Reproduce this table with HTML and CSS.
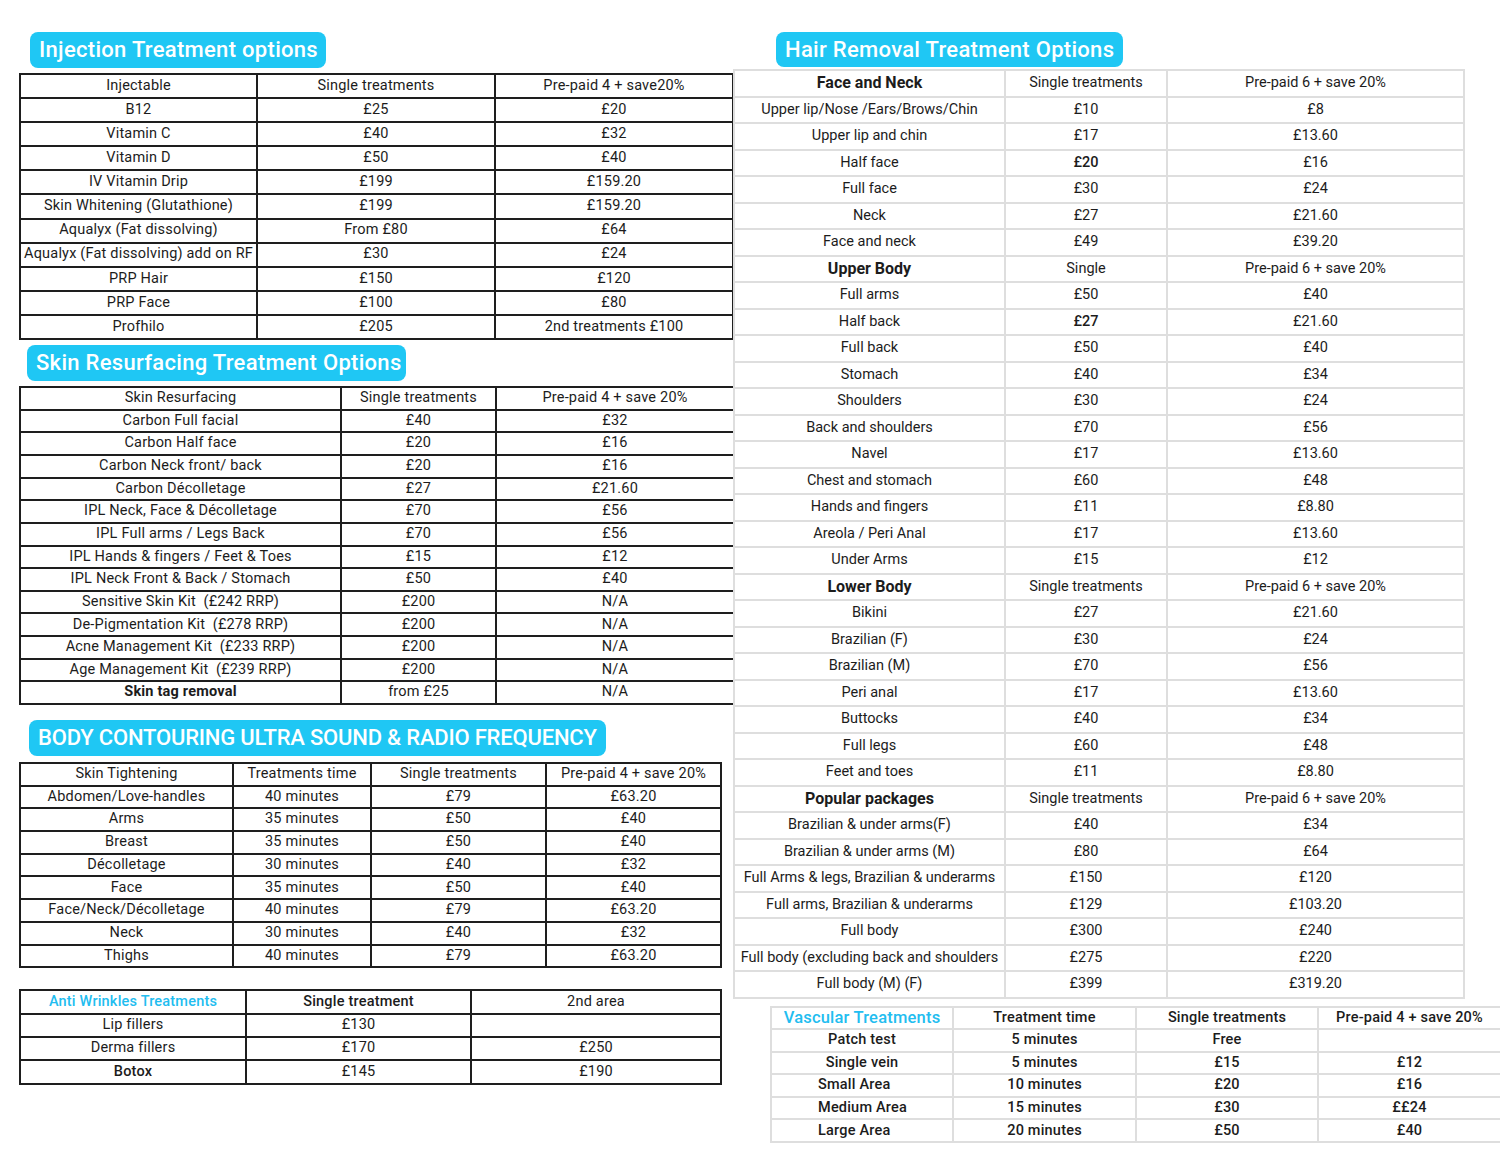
FILE: index.html
```html
<!DOCTYPE html>
<html>
<head>
<meta charset="utf-8">
<link rel="stylesheet" href="styles.css">
</head>
<body>
<div class="page">
  <div class="col-left">
    <div class="pill pill-inj">Injection Treatment options</div>
    <table class="dark t-inj">
      <colgroup><col style="width:237px"><col style="width:238px"><col style="width:238px"></colgroup>
      <tr><td>Injectable</td><td>Single treatments</td><td>Pre-paid 4 + save20%</td></tr>
      <tr><td>B12</td><td>£25</td><td>£20</td></tr>
      <tr><td>Vitamin C</td><td>£40</td><td>£32</td></tr>
      <tr><td>Vitamin D</td><td>£50</td><td>£40</td></tr>
      <tr><td>IV Vitamin Drip</td><td>£199</td><td>£159.20</td></tr>
      <tr><td>Skin Whitening (Glutathione)</td><td>£199</td><td>£159.20</td></tr>
      <tr><td>Aqualyx (Fat dissolving)</td><td>From £80</td><td>£64</td></tr>
      <tr><td>Aqualyx (Fat dissolving) add on RF</td><td>£30</td><td>£24</td></tr>
      <tr><td>PRP Hair</td><td>£150</td><td>£120</td></tr>
      <tr><td>PRP Face</td><td>£100</td><td>£80</td></tr>
      <tr><td>Profhilo</td><td>£205</td><td>2nd treatments £100</td></tr>
    </table>

    <div class="pill pill-skin">Skin Resurfacing Treatment Options</div>
    <table class="dark t-skin">
      <colgroup><col style="width:321px"><col style="width:155px"><col style="width:238px"></colgroup>
      <tr><td>Skin Resurfacing</td><td>Single treatments</td><td>Pre-paid 4 + save 20%</td></tr>
      <tr><td>Carbon Full facial</td><td>£40</td><td>£32</td></tr>
      <tr><td>Carbon Half face</td><td>£20</td><td>£16</td></tr>
      <tr><td>Carbon Neck front/ back</td><td>£20</td><td>£16</td></tr>
      <tr><td>Carbon Décolletage</td><td>£27</td><td>£21.60</td></tr>
      <tr><td>IPL Neck, Face &amp; Décolletage</td><td>£70</td><td>£56</td></tr>
      <tr><td>IPL Full arms / Legs Back</td><td>£70</td><td>£56</td></tr>
      <tr><td>IPL Hands &amp; fingers / Feet &amp; Toes</td><td>£15</td><td>£12</td></tr>
      <tr><td>IPL Neck Front &amp; Back / Stomach</td><td>£50</td><td>£40</td></tr>
      <tr><td>Sensitive Skin Kit&nbsp;&nbsp;(£242 RRP)</td><td>£200</td><td>N/A</td></tr>
      <tr><td>De-Pigmentation Kit&nbsp;&nbsp;(£278 RRP)</td><td>£200</td><td>N/A</td></tr>
      <tr><td>Acne Management Kit&nbsp;&nbsp;(£233 RRP)</td><td>£200</td><td>N/A</td></tr>
      <tr><td>Age Management Kit&nbsp;&nbsp;(£239 RRP)</td><td>£200</td><td>N/A</td></tr>
      <tr><td class="b">Skin tag removal</td><td>from £25</td><td>N/A</td></tr>
    </table>

    <div class="pill pill-body">BODY CONTOURING ULTRA SOUND &amp; RADIO FREQUENCY</div>
    <table class="dark t-body">
      <colgroup><col style="width:213px"><col style="width:138px"><col style="width:175px"><col style="width:175px"></colgroup>
      <tr><td>Skin Tightening</td><td>Treatments time</td><td>Single treatments</td><td>Pre-paid 4 + save 20%</td></tr>
      <tr><td>Abdomen/Love-handles</td><td>40 minutes</td><td>£79</td><td>£63.20</td></tr>
      <tr><td>Arms</td><td>35 minutes</td><td>£50</td><td>£40</td></tr>
      <tr><td>Breast</td><td>35 minutes</td><td>£50</td><td>£40</td></tr>
      <tr><td>Décolletage</td><td>30 minutes</td><td>£40</td><td>£32</td></tr>
      <tr><td>Face</td><td>35 minutes</td><td>£50</td><td>£40</td></tr>
      <tr><td>Face/Neck/Décolletage</td><td>40 minutes</td><td>£79</td><td>£63.20</td></tr>
      <tr><td>Neck</td><td>30 minutes</td><td>£40</td><td>£32</td></tr>
      <tr><td>Thighs</td><td>40 minutes</td><td>£79</td><td>£63.20</td></tr>
    </table>

    <table class="dark t-anti">
      <colgroup><col style="width:226px"><col style="width:225px"><col style="width:250px"></colgroup>
      <tr><td class="cyan">Anti Wrinkles Treatments</td><td class="m">Single treatment</td><td>2nd area</td></tr>
      <tr><td>Lip fillers</td><td>£130</td><td></td></tr>
      <tr><td>Derma fillers</td><td>£170</td><td>£250</td></tr>
      <tr><td class="m">Botox</td><td>£145</td><td>£190</td></tr>
    </table>
  </div>

  <div class="col-right">
    <div class="pill pill-hair">Hair Removal Treatment Options</div>
    <table class="light t-hair">
      <colgroup><col style="width:271px"><col style="width:162px"><col style="width:297px"></colgroup>
      <tr><td class="sec">Face and Neck</td><td>Single treatments</td><td>Pre-paid 6 + save 20%</td></tr>
      <tr><td>Upper lip/Nose /Ears/Brows/Chin</td><td>£10</td><td>£8</td></tr>
      <tr><td>Upper lip and chin</td><td>£17</td><td>£13.60</td></tr>
      <tr><td>Half face</td><td class="m">£20</td><td>£16</td></tr>
      <tr><td>Full face</td><td>£30</td><td>£24</td></tr>
      <tr><td>Neck</td><td>£27</td><td>£21.60</td></tr>
      <tr><td>Face and neck</td><td>£49</td><td>£39.20</td></tr>
      <tr><td class="sec">Upper Body</td><td>Single</td><td>Pre-paid 6 + save 20%</td></tr>
      <tr><td>Full arms</td><td>£50</td><td>£40</td></tr>
      <tr><td>Half back</td><td class="m">£27</td><td>£21.60</td></tr>
      <tr><td>Full back</td><td>£50</td><td>£40</td></tr>
      <tr><td>Stomach</td><td>£40</td><td>£34</td></tr>
      <tr><td>Shoulders</td><td>£30</td><td>£24</td></tr>
      <tr><td>Back and shoulders</td><td>£70</td><td>£56</td></tr>
      <tr><td>Navel</td><td>£17</td><td>£13.60</td></tr>
      <tr><td>Chest and stomach</td><td>£60</td><td>£48</td></tr>
      <tr><td>Hands and fingers</td><td>£11</td><td>£8.80</td></tr>
      <tr><td>Areola / Peri Anal</td><td>£17</td><td>£13.60</td></tr>
      <tr><td>Under Arms</td><td>£15</td><td>£12</td></tr>
      <tr><td class="sec">Lower Body</td><td>Single treatments</td><td>Pre-paid 6 + save 20%</td></tr>
      <tr><td>Bikini</td><td>£27</td><td>£21.60</td></tr>
      <tr><td>Brazilian (F)</td><td>£30</td><td>£24</td></tr>
      <tr><td>Brazilian (M)</td><td>£70</td><td>£56</td></tr>
      <tr><td>Peri anal</td><td>£17</td><td>£13.60</td></tr>
      <tr><td>Buttocks</td><td>£40</td><td>£34</td></tr>
      <tr><td>Full legs</td><td>£60</td><td>£48</td></tr>
      <tr><td>Feet and toes</td><td>£11</td><td>£8.80</td></tr>
      <tr><td class="sec">Popular packages</td><td>Single treatments</td><td>Pre-paid 6 + save 20%</td></tr>
      <tr><td>Brazilian &amp; under arms(F)</td><td>£40</td><td>£34</td></tr>
      <tr><td>Brazilian &amp; under arms (M)</td><td>£80</td><td>£64</td></tr>
      <tr><td>Full Arms &amp; legs, Brazilian &amp; underarms</td><td>£150</td><td>£120</td></tr>
      <tr><td>Full arms, Brazilian &amp; underarms</td><td>£129</td><td>£103.20</td></tr>
      <tr><td>Full body</td><td>£300</td><td>£240</td></tr>
      <tr><td>Full body (excluding back and shoulders</td><td>£275</td><td>£220</td></tr>
      <tr><td>Full body (M) (F)</td><td>£399</td><td>£319.20</td></tr>
    </table>

    <table class="light t-vasc">
      <colgroup><col style="width:182px"><col style="width:183px"><col style="width:182px"><col style="width:183px"></colgroup>
      <tr><td class="cyan vh">Vascular Treatments</td><td>Treatment time</td><td>Single treatments</td><td>Pre-paid 4 + save 20%</td></tr>
      <tr><td>Patch test</td><td>5 minutes</td><td>Free</td><td></td></tr>
      <tr><td>Single vein</td><td>5 minutes</td><td>£15</td><td>£12</td></tr>
      <tr><td class="sh">Small Area</td><td>10 minutes</td><td>£20</td><td>£16</td></tr>
      <tr><td class="sh">Medium Area</td><td>15 minutes</td><td>£30</td><td>££24</td></tr>
      <tr><td class="sh">Large Area</td><td>20 minutes</td><td>£50</td><td>£40</td></tr>
    </table>
  </div>
</div>
</body>
</html>
```

FILE: styles.css
```css
* { box-sizing: border-box; }
html, body { margin: 0; padding: 0; background: #fff; }
body {
  font-family: Roboto, "Liberation Sans", sans-serif;
  color: #1c1c1c;
  width: 1500px;
  height: 1159px;
  overflow: hidden;
}
.page {
  display: flex;
  align-items: flex-start;
}
.col-left {
  width: 733px;
  padding-left: 19px;
  padding-top: 32px;
  flex: none;
}
.col-right {
  width: 767px;
  padding-top: 32px;
  flex: none;
}
.pill {
  display: inline-block;
  background: #1fc7f4;
  color: #fff;
  font-weight: 500;
  font-size: 22px;
  letter-spacing: 0.3px;
  line-height: 36px;
  height: 36px;
  padding: 0 9px;
  border-radius: 8px;
  white-space: nowrap;
}
.pill-inj { margin-left: 11px; width: 296px; }
.pill-skin { margin-left: 8px; margin-top: 5px; width: 379px; }
.pill-body { margin-left: 10px; margin-top: 15px; width: 577px; letter-spacing: -0.2px; }
.pill-hair { margin-left: 43px; width: 347px; height: 35px; line-height: 35px; }

table {
  border-collapse: collapse;
  table-layout: fixed;
}
td {
  text-align: center;
  padding: 0;
  white-space: nowrap;
  overflow: hidden;
  font-size: 14.5px;
  letter-spacing: 0.2px;
  line-height: 1;
}
.dark td { border: 2px solid #1e1e1e; }
.light td { border: 2px solid #dedede; }

.t-inj { width: 714px; margin-top: 5px; }
.t-inj tr { height: 24.1px; }

.t-skin { width: 714px; margin-top: 5px; }
.t-skin tr { height: 22.65px; }

.t-body { width: 701px; margin-top: 6px; }
.t-body tr { height: 22.7px; }

.t-anti { width: 701px; margin-top: 21px; }
.t-anti tr { height: 23.4px; }

.t-hair { width: 730px; margin-top: 2px; }
.t-hair tr { height: 26.5px; }
.t-hair td { letter-spacing: 0; }

.t-vasc { width: 730px; margin-top: 7px; margin-left: 37px; }
.t-vasc tr { height: 22.6px; }
.t-vasc td { font-weight: 500; }

.b { font-weight: 700; }
.m { font-weight: 500; }
.sec { font-weight: 700; font-size: 16px !important; }
.cyan { color: #22bdf0; font-weight: 500; }
.vh { font-size: 16.5px !important; }
.sh { text-align: left; padding-left: 46px; }
```
